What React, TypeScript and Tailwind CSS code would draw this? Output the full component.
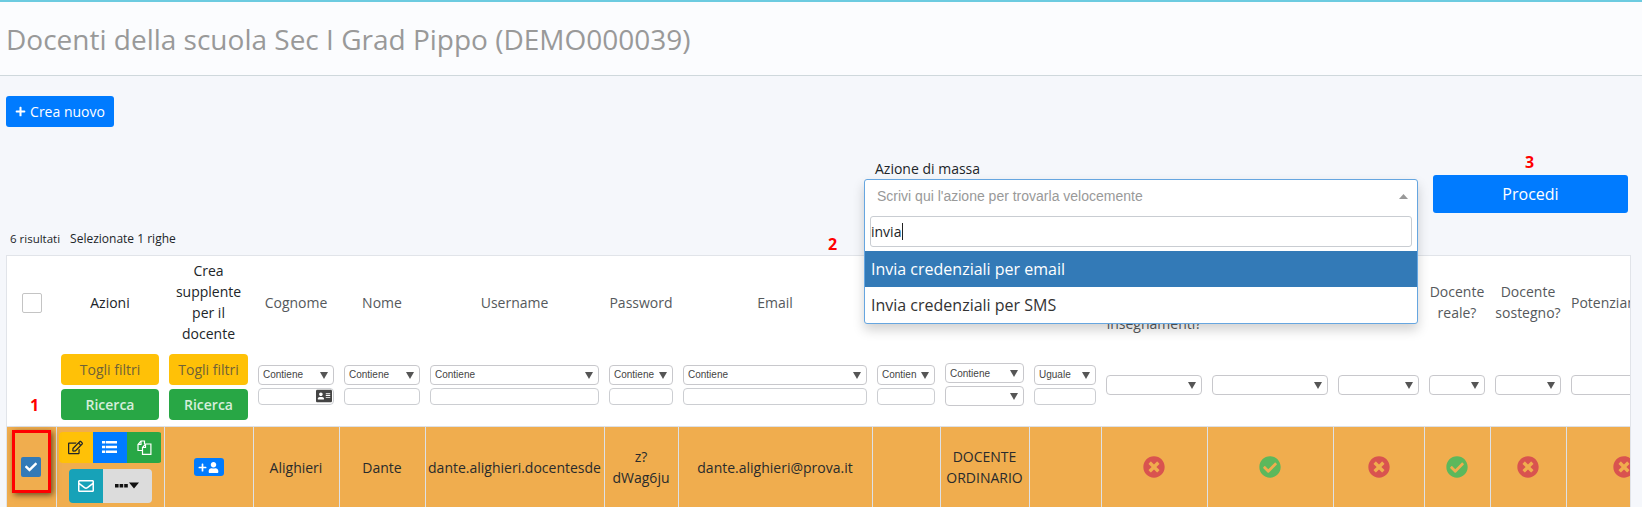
import React from 'react';
import {
  FaAddressCard,
  FaCheck,
  FaCheckCircle,
  FaPlus,
  FaRegEdit,
  FaRegEnvelope,
  FaTimesCircle,
  FaUser,
} from 'react-icons/fa';

const columns = [49, 108, 89, 86, 86, 179, 74, 194, 68, 89, 72, 106, 126, 91, 66, 76, 116];

const Arrow = () => (
  <svg width="8" height="8" viewBox="0 0 8 8" className="shrink-0 fill-[#555]">
    <path d="M0 1h8L4 8z" />
  </svg>
);

const ListIcon = () => (
  <svg width="15" height="12" viewBox="0 0 15 12" className="fill-white">
    <path d="M0 0h3v2.5H0zM3.7 0H15v2.5H3.7zM0 4.7h3v2.6H0zM3.7 4.7H15v2.6H3.7zM0 9.5h3V12H0zM3.7 9.5H15V12H3.7z" />
  </svg>
);

const FilesIcon = () => (
  <svg width="15" height="15" viewBox="0 0 15 15" fill="none" stroke="white" strokeWidth="1.2">
    <path d="M5.5 10.5H1V4.5L4 1h3.5v3" />
    <path d="M4 1v3.5H1" />
    <path d="M5.5 14.4V7.5l3-3.5h5.4v10.4z" />
    <path d="M8.5 4v3.5h-3" />
  </svg>
);

const MoreIcon = () => (
  <svg width="24" height="7" viewBox="0 0 24 7" className="fill-[#111]">
    <path d="M0 2h3.6v3.4H0zM4.6 2h3.6v3.4H4.6zM9.2 2h3.6v3.4H9.2zM14 0.5h10L19 6.5z" />
  </svg>
);

const Select = ({ label = '' }: { label?: string }) => (
  <div className="flex h-[20px] w-full items-center justify-between overflow-hidden rounded-[4px] border border-[#c8c8cc] bg-white pl-[4px] pr-[5px] font-['Liberation_Sans',sans-serif] text-[10px] text-[#444]">
    <span className="whitespace-nowrap">{label}</span>
    <Arrow />
  </div>
);

const TextFilter = ({ icon = false }: { icon?: boolean }) => (
  <div className="mt-[3px] flex h-[17px] w-full items-center justify-end rounded-[4px] border border-[#ccced2] bg-white pr-[1px]">
    {icon && <FaAddressCard className="text-[16px] text-[#444]" />}
  </div>
);

const Filter = ({ label, icon }: { label: string; icon?: boolean }) => (
  <th className="px-[5px] pb-[6px] align-middle font-normal">
    <Select label={label} />
    <TextFilter icon={icon} />
  </th>
);

const BlankFilter = () => (
  <th className="px-[5px] pb-[6px] align-middle font-normal">
    <Select />
  </th>
);

const FilterButtons = () => (
  <div className="flex flex-col gap-[4px]">
    <div className="flex h-[31px] items-center justify-center rounded-[4px] bg-[#ffc107] text-[14px] font-medium text-[#6f6238]">Togli filtri</div>
    <div className="flex h-[31px] items-center justify-center rounded-[4px] bg-[#28a745] text-[14px] font-semibold text-[#d5eedb]">Ricerca</div>
  </div>
);

const Flag = ({ ok }: { ok: boolean }) => (
  <td className="border-l border-[#dde1e6] text-center align-middle">
    {ok ? (
      <FaCheckCircle className="mx-auto text-[22px] text-[#5cb85c]" />
    ) : (
      <FaTimesCircle className="mx-auto text-[22px] text-[#d9534f]" />
    )}
  </td>
);

const Cell = ({ children }: { children?: React.ReactNode }) => (
  <td className="border-l border-[#dde1e6] text-center align-middle leading-[21px]">{children}</td>
);

const Head = ({ children, dark = false }: { children?: React.ReactNode; dark?: boolean }) => (
  <th className={`px-[2px] pb-[2px] text-center align-middle text-[14px] font-medium leading-[21px] ${dark ? 'text-[#212529]' : 'text-[#55595c]'}`}>
    {children}
  </th>
);

export default function App() {
  return (
    <div className="h-[507px] w-[1642px] overflow-hidden bg-[#f5f7fb] font-['Open_Sans',sans-serif] text-[14px] text-[#212529]">
      <div className="h-[2px] bg-[#6ccbe0]" />
      <div className="flex h-[74px] items-center border-b border-[#cfd8dc] bg-[#fbfcfe] px-[6px]">
        <h1 className="text-[28px] font-normal leading-none text-[#999]">Docenti della scuola Sec I Grad Pippo (DEMO000039)</h1>
      </div>

      <div className="mt-[20px] pl-[6px]">
        <button className="flex h-[31px] w-[108px] items-center justify-center gap-[4px] rounded-[3px] bg-[#007bff] text-[14px] text-white">
          <FaPlus className="text-[11px]" />
          Crea nuovo
        </button>
      </div>

      <div className="flex h-[100px] justify-end gap-[15px] pr-[14px] pt-[31px]">
        <div className="relative w-[554px]">
          <div className="h-[21px] pl-[11px] text-[14px] leading-[21px]">Azione di massa</div>
          <div className="absolute left-0 top-[21px] z-20 w-[554px] rounded-[3px] border border-[#66a6e0] bg-white shadow-[0_6px_12px_rgba(0,0,0,0.18)]">
            <div className="flex h-[36px] items-center justify-between pb-[3px] pl-[12px] pr-[9px] text-[14px] text-[#999]">
              <span className="font-['Liberation_Sans',sans-serif]">Scrivi qui l'azione per trovarla velocemente</span>
              <svg width="9" height="5" viewBox="0 0 9 5" className="fill-[#999]">
                <path d="M0 5L4.5 0 9 5z" />
              </svg>
            </div>
            <div className="px-[5px] pb-[4px]">
              <div className="flex h-[31px] items-center rounded-[3px] border border-[#c9cdd2] text-[14px]">
                invia
                <span className="ml-px h-[17px] w-px bg-[#222]" />
              </div>
            </div>
            <div className="flex h-[36px] items-center bg-[#337ab7] px-[6px] text-[16px] text-white">Invia credenziali per email</div>
            <div className="flex h-[36px] items-center px-[6px] text-[16px] text-[#333]">Invia credenziali per SMS</div>
          </div>
        </div>
        <div className="relative pt-[17px]">
          <div className="absolute left-[92px] top-[-8px] text-[16px] font-bold text-[#f00]">3</div>
          <button className="h-[38px] w-[195px] rounded-[3px] bg-[#007bff] text-[16px] text-white">Procedi</button>
        </div>
      </div>

      <div className="relative flex h-[28px] items-center gap-[10px] pb-[4px] pl-[10px] text-[11.5px]">
        <span>6 risultati</span>
        <span className="text-[12px]">Selezionate 1 righe</span>
        <span className="absolute left-[828px] top-[5px] text-[16px] font-bold text-[#f00]">2</span>
      </div>

      <div className="ml-[6px] mr-[11px] h-[260px] overflow-hidden border border-[#e1e4e9] bg-white">
        <table className="w-[1675px] table-fixed border-collapse">
          <colgroup>
            {columns.map((w, i) => (
              <col key={i} style={{ width: w }} />
            ))}
          </colgroup>
          <thead>
            <tr className="h-[94px]">
              <th className="align-middle">
                <div className="mx-auto h-[20px] w-[20px] rounded-[2px] border border-[#c4c4c4] bg-white" />
              </th>
              <Head dark>Azioni</Head>
              <Head dark>Crea supplente per il docente</Head>
              <Head>Cognome</Head>
              <Head>Nome</Head>
              <Head>Username</Head>
              <Head>Password</Head>
              <Head>Email</Head>
              <Head />
              <Head />
              <Head />
              <Head>Docente con più insegnamenti?</Head>
              <Head />
              <Head />
              <Head>Docente reale?</Head>
              <Head>Docente sostegno?</Head>
              <Head>
                <span className="block whitespace-nowrap pl-[3px] text-left">Potenziamento</span>
              </Head>
            </tr>
            <tr className="h-[76px] border-b border-[#dde1e6]">
              <th className="relative align-middle">
                <span className="absolute left-[23px] top-[43px] text-[16px] font-bold text-[#f00]">1</span>
              </th>
              <th className="px-[5px] pb-[2px] font-normal"><FilterButtons /></th>
              <th className="px-[5px] pb-[2px] font-normal"><FilterButtons /></th>
              <Filter label="Contiene" icon />
              <Filter label="Contiene" />
              <Filter label="Contiene" />
              <Filter label="Contiene" />
              <Filter label="Contiene" />
              <Filter label="Contien" />
              <th className="px-[5px] pb-[6px] align-middle font-normal">
                <Select label="Contiene" />
                <div className="mt-[3px]"><Select /></div>
              </th>
              <Filter label="Uguale" />
              <BlankFilter />
              <BlankFilter />
              <BlankFilter />
              <BlankFilter />
              <BlankFilter />
              <BlankFilter />
            </tr>
          </thead>
          <tbody>
            <tr className="h-[82px] bg-[#f0ad4e] text-[14px] text-[#292b2c]">
              <td className="relative">
                <div className="mx-auto flex h-[20px] w-[20px] items-center justify-center rounded-[2px] bg-[#337ab7] text-[12px] text-white">
                  <FaCheck />
                </div>
                <div className="absolute left-[5px] top-[3px] h-[63px] w-[39px] border-[3px] border-[#f00] shadow-[2px_2px_6px_rgba(0,0,0,0.55)]" />
              </td>
              <td className="border-l border-[#dde1e6] px-[2px] pt-[5px] align-top">
                <div className="flex h-[31px] overflow-hidden rounded-[4px] text-[15px]">
                  <div className="flex flex-1 items-center justify-center bg-[#ffc107] text-[#212529]"><FaRegEdit /></div>
                  <div className="flex flex-1 items-center justify-center bg-[#007bff]"><ListIcon /></div>
                  <div className="flex flex-1 items-center justify-center bg-[#28a745]"><FilesIcon /></div>
                </div>
                <div className="mx-auto mt-[6px] flex h-[34px] w-[83px] overflow-hidden rounded-[4px]">
                  <div className="flex w-[34px] items-center justify-center bg-[#17a2b8] text-[16px] text-white"><FaRegEnvelope /></div>
                  <div className="flex flex-1 items-center justify-center bg-[#dcdcdc]"><MoreIcon /></div>
                </div>
              </td>
              <Cell>
                <div className="mx-auto flex h-[18px] w-[30px] items-center justify-center gap-px rounded-[3px] bg-[#007bff] text-white">
                  <FaPlus className="text-[9px]" />
                  <FaUser className="text-[11px]" />
                </div>
              </Cell>
              <Cell>Alighieri</Cell>
              <Cell>Dante</Cell>
              <Cell><span className="whitespace-nowrap">dante.alighieri.docentesde</span></Cell>
              <Cell>z?<br />dWag6ju</Cell>
              <Cell>dante.alighieri@prova.it</Cell>
              <Cell />
              <Cell>DOCENTE ORDINARIO</Cell>
              <Cell />
              <Flag ok={false} />
              <Flag ok />
              <Flag ok={false} />
              <Flag ok />
              <Flag ok={false} />
              <Flag ok={false} />
            </tr>
          </tbody>
        </table>
      </div>
    </div>
  );
}
